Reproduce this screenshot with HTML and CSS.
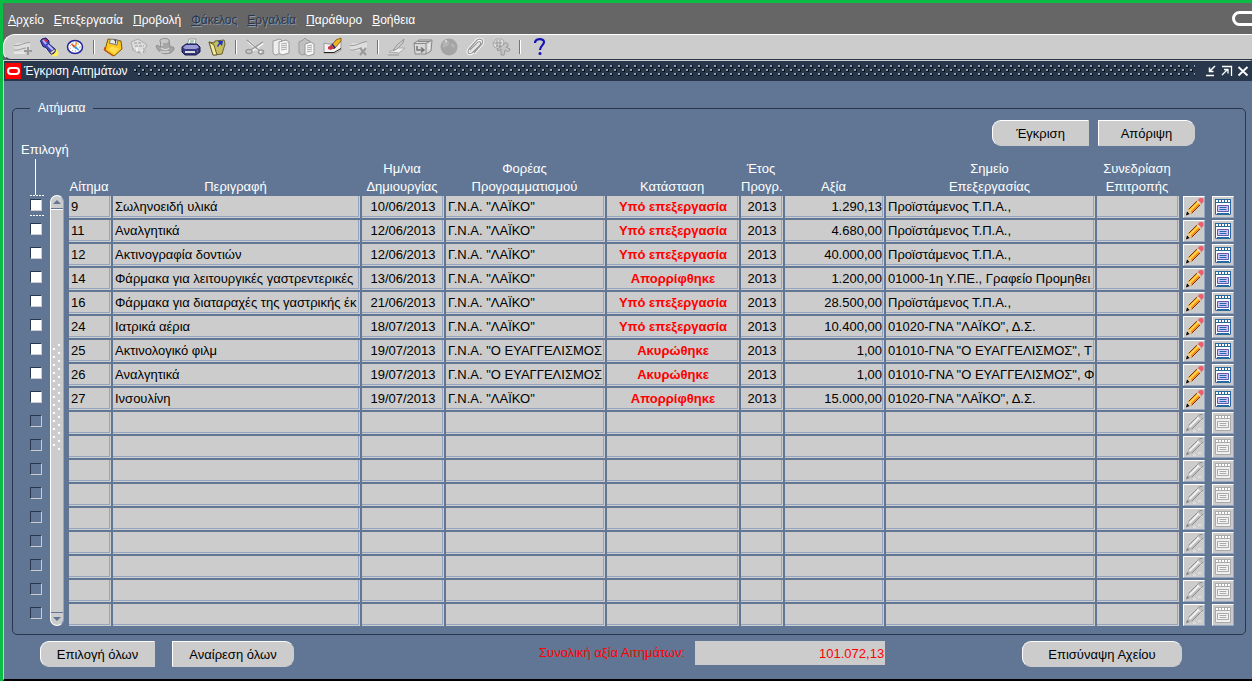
FILE: index.html
```html
<!DOCTYPE html>
<html lang="el">
<head>
<meta charset="utf-8">
<meta name="viewport" content="width=device-width, initial-scale=1">
<title>Έγκριση Αιτημάτων</title>
<link rel="stylesheet" href="styles.css">
</head>
<body>
<svg class="sprite" aria-hidden="true">
  <symbol id="pencil" viewBox="0 0 20 20"><path d="M3 18 4.500 12 14 2.500l4 4L8 16z" fill="#f79018"/><path d="M5.500 14 15 4.500" stroke="#ffd24a" stroke-width="2"/><path d="m7.500 16.500 10-10M4.500 12.500 14 3" stroke="#7a3a08" fill="none"/><path d="m14 3 1.500-2h3l1 1v3L17 7z" fill="#f0606a"/><path d="m13 3.500 4 4" stroke="#ddd" stroke-width="1.500"/><path d="M3 18l1.500-6 3.500 4z" fill="#ecc79a"/><path d="M2 18.500 3 14.500 5.500 17z" fill="#000"/></symbol>
  <symbol id="pencil-off" viewBox="0 0 20 20"><path d="M3 18 4.500 12 14 2.500l1.500-1.500h3l1 1v3L8 16z" fill="#bdbdbd"/><path d="M5.500 14 15 4.500" stroke="#f2f2f2" stroke-width="2"/><path d="m7.500 16.500 11.500-11.500M4.500 12.500 14 3l1.500-1.500h3" stroke="#8e8e8e" fill="none"/><path d="m13 3.500 4 4M9 18h3M14 16h3" stroke="#eee"/><path d="M2 18.500 3 14.500 5.500 17z" fill="#888"/></symbol>
  <symbol id="sheet" viewBox="0 0 20 20"><path fill="#fff" d="M2 2h16v16H2z"/><path d="M2.500 2.500h15v15h-15z" fill="none" stroke="#2866a0"/><path fill="#2866a0" d="M2 2h16v4H2z"/><path d="M3 4h15" stroke="#fff" stroke-width="2" stroke-dasharray="2 1"/><path d="M4.500 8.500h11v6h-11z" fill="#ccc8ff" stroke="#6058a8"/><path d="M6.500 10.500h7M6.500 12.500h7" stroke="#2866a0"/><path d="M4 16.500h12" stroke="#2866a0"/></symbol>
  <symbol id="sheet-off" viewBox="0 0 20 20"><path d="M2.500 2.500h15v15h-15z" fill="#eee" stroke="#aaa"/><path fill="#aaa" d="M2 2h16v4H2z"/><path d="M3 4h15" stroke="#fff" stroke-width="2" stroke-dasharray="2 1"/><path d="M4.500 8.500h11v6h-11z" fill="#f4f4f4" stroke="#aaa"/><path d="M6.500 10.500h7M6.500 12.500h7" stroke="#aaa"/></symbol>
</svg>

<nav class="menubar">
  <button class="menu"><u>Α</u>ρχείο</button>
  <button class="menu"><u>Ε</u>πεξεργασία</button>
  <button class="menu"><u>Π</u>ροβολή</button>
  <button class="menu" disabled><u>Φ</u>άκελος</button>
  <button class="menu" disabled><u>Ε</u>ργαλεία</button>
  <button class="menu"><u>Π</u>αράθυρο</button>
  <button class="menu"><u>Β</u>οήθεια</button>
  <svg class="brand" width="20" height="16" viewBox="0 0 20 16" aria-hidden="true"><rect x="1.500" y="1.500" width="28" height="12" rx="6" fill="none" stroke="#fff" stroke-width="3"/></svg>
</nav>

<div class="toolbar" role="toolbar" aria-label="Εργαλεία">
  <button class="tool" disabled aria-label="Νέα εγγραφή"><svg viewBox="0 0 20 20"><path d="M1 8l3-2h10l3-1v9l-4 1H1z" fill="#dedede"/><path d="M1 8.500c5 1 10-3 16-3M1 13c5 1 8-2 12-2" stroke="#999" fill="none"/><path d="M1 16h11" stroke="#fff"/><path d="M15 10v8M11 14h8" stroke="#999" stroke-width="2"/></svg></button>
  <button class="tool" aria-label="Εύρεση"><svg viewBox="0 0 20 20"><circle cx="16" cy="16" r="3.500" fill="#ffee55"/><path d="M1.500 4 3 2l4-1 3 3v3l6 5c1 3-1 5-4 5L7 10.500l-3-1z" fill="#4a4ac0" stroke="#16166a"/><path d="m4 3 3 4M9 8l5 5" stroke="#b4bbff" stroke-width="2"/><path d="M5.500 2.500 8 4" stroke="#e22" stroke-width="2"/><path d="m11 15.500 4.500-3.500 1 2-4 3z" fill="#ddd" stroke="#444" stroke-width=".7"/></svg></button>
  <button class="tool" aria-label="Πλοήγηση"><svg viewBox="0 0 20 20"><ellipse cx="10" cy="10" rx="7.500" ry="6.500" fill="#fff" stroke="#24249c" stroke-width="1.500"/><ellipse cx="10" cy="10" rx="5" ry="4" fill="none" stroke="#888" stroke-dasharray="1 2"/><path d="m5 6 6 3-2 2z" fill="#e05020"/><path d="m15 14-6-3 2-2z" fill="#2ba0ee"/><path d="m12 5-2 5" stroke="#e89a20" stroke-width="1.500"/></svg></button>
  <span class="sep"></span>
  <button class="tool" aria-label="Αποθήκευση"><svg viewBox="0 0 20 20"><path d="M5 2 18 4l1 8-8 7-9-6z" fill="#ffc61a" stroke="#7a5a00"/><path d="m8 2 7 1-1 5-8-2z" fill="#e8e8e8" stroke="#777"/><path d="m11 3 2 .5-.7 3" stroke="#333" fill="none"/><path d="m5 13 7 4 4-5-7-3z" fill="#ffdc50"/><path d="m2 10-1 3 9 6" fill="none" stroke="#d04a10"/></svg></button>
  <button class="tool" disabled aria-label="Επόμενο βήμα"><svg viewBox="0 0 20 20"><path d="m2 5 7-3 9 6-5 9-9-4z" fill="#ddd" stroke="#aaa"/><path d="M5 6h8M6 9h9M4 12h12M8 15h9" stroke="#999" stroke-dasharray="3 1"/><path d="M8 10v5M13 11v6M5 12h6" stroke="#fff"/></svg></button>
  <button class="tool" disabled aria-label="Αλλαγή αρμοδιότητας"><svg viewBox="0 0 20 20"><path d="M1 9c2-2 3 1 5 1l-1-7c3-2 7-2 9 0l1 7c2 0 3-1 4 1 0 7-15 9-18-2z" fill="#a6a6a6" stroke="#8c8c8c"/><ellipse cx="9.500" cy="4" rx="4" ry="2" fill="#c8c8c8"/><path d="M6 11c3 2 6 2 8 0M5 15h9M7 6v3" stroke="#eee" fill="none"/></svg></button>
  <button class="tool" aria-label="Εκτύπωση"><svg viewBox="0 0 20 20"><path d="m6 8 2-6h7l-1 6z" fill="#fff" stroke="#999"/><path d="M9 4h4M8.500 6h4" stroke="#55a080"/><path d="m1 10 4-3h11l3 3v5l-4 3H4l-3-3z" fill="#38387c" stroke="#18184c"/><path d="M2 10.500 5 8h11l2 2.500-3 1.500H4z" fill="#9c9cd8"/><path d="M4 15h10" stroke="#ddd" stroke-width="2"/><path d="M16 14h1" stroke="#e33" stroke-width="2"/></svg></button>
  <button class="tool" aria-label="Κλείσιμο φόρμας"><svg viewBox="0 0 20 20"><path d="m2 5 5 1 1-2 9-1 1 4-3 10-9 1z" fill="#c6bd62" stroke="#68602a"/><path d="m2 5 5 3 3 10-4 0z" fill="#f0eaa0" stroke="#68602a"/><path d="m11 4 5 0-1 5-2-2-2 3-1-1 2-3z" fill="#1a35c8"/></svg></button>
  <span class="sep"></span>
  <button class="tool" disabled aria-label="Αποκοπή"><svg viewBox="0 0 20 20"><path d="m3 4 13 11M18 6 6 14" stroke="#fff" stroke-width="2.500"/><path d="m2 3 13 11M18 5 6 13" stroke="#999" stroke-width="1.500"/><ellipse cx="4" cy="14.500" rx="3" ry="2" fill="none" stroke="#999" stroke-width="1.500"/><ellipse cx="16" cy="15" rx="2.500" ry="2" fill="none" stroke="#999" stroke-width="1.500"/></svg></button>
  <button class="tool" disabled aria-label="Αντιγραφή"><svg viewBox="0 0 20 20"><path d="m2 4 7-2 2 2v12l-7 2-2-2z" fill="#eee" stroke="#999"/><path d="m8 5 7-2 3 2v11l-7 2-3-2z" fill="#f6f6f6" stroke="#999"/><path d="m10 7 6-1M10 9l6-1M10 11l6-1M10 13l6-1" stroke="#aaa"/></svg></button>
  <button class="tool" disabled aria-label="Επικόλληση"><svg viewBox="0 0 20 20"><path d="m2 5 4-2 2-2 2 2 3 1v12l-8 2-3-2z" fill="#c0c0c0" stroke="#999"/><path d="m8 7 6-2 3 2v10l-6 2-3-2z" fill="#f6f6f6" stroke="#999"/><path d="m10 9 5-1M10 11l5-1M10 13l5-1M10 15l5-1" stroke="#aaa"/></svg></button>
  <button class="tool" aria-label="Καθαρισμός εγγραφής"><svg viewBox="0 0 20 20"><path d="M1 6l4 1h8l5-3v9l-5 3H1z" fill="#f2f2f2" stroke="#999"/><path d="M1 15.500h10l7-4" stroke="#222" fill="none"/><path d="m8 9 5-6 5-2v3l-7 8z" fill="#eeb522" stroke="#8b6210"/><path d="m5 10 3-2 3 3-3 2-3-1z" fill="#cc3344"/><path d="m9 7 3 4" stroke="#222288" stroke-width="1.500"/></svg></button>
  <button class="tool" disabled aria-label="Διαγραφή"><svg viewBox="0 0 20 20"><path d="M1 8l3-2h10l4-2v8l-4 2H1z" fill="#dedede"/><path d="M1 8.500c5 1 10-3 17-4M1 13c5 1 8-2 12-2" stroke="#999" fill="none"/><path d="m11 11 6 7M17 11l-6 7" stroke="#999" stroke-width="2"/></svg></button>
  <span class="sep"></span>
  <button class="tool" disabled aria-label="Επεξεργασία πεδίου"><svg viewBox="0 0 20 20"><path d="m2 15 7-4h9l-6 5z" fill="#eee" stroke="#aaa"/><path d="m6 14 4-6 7-6-1 4-6 6z" fill="#ccc" stroke="#999"/><path d="M1 18h11" stroke="#999"/></svg></button>
  <button class="tool" disabled aria-label="Μεταφορά"><svg viewBox="0 0 20 20"><path d="m1 6 5-3h13l-1 11-5 3H2z" fill="#d8d8d8" stroke="#888"/><path d="M1 6.500h12l5-3M13 7v10M5 4.500h12" stroke="#888" fill="none"/><path d="M4 9v4h6M8 10.500l3 2.500-3 2.500" stroke="#777" stroke-width="1.500" fill="none"/><path d="M15 8h2M15 11h2" stroke="#fff"/></svg></button>
  <button class="tool" disabled aria-label="Σφαίρα"><svg viewBox="0 0 20 20"><circle cx="10" cy="10" r="8.500" fill="#a4a4a4"/><path d="M4 6c3-4 7-2 6 1s-4 2-6 4zM12 6l4 2-1 3-3-2z" fill="#b4b4b4"/><path d="M6 4h2" stroke="#fff"/></svg></button>
  <button class="tool" disabled aria-label="Συνημμένα"><svg viewBox="0 0 20 20"><path d="m5 13 8-8c3-1 3 1 2 3l-8 8c-4 2-5-1-3-4l8-9c4-2 7 0 5 4l-8 9" fill="none" stroke="#fff" stroke-width="3"/><path d="m5 13 8-8c3-1 3 1 2 3l-8 8c-4 2-5-1-3-4l8-9c4-2 7 0 5 4l-8 9" fill="none" stroke="#999" stroke-width="1.300"/></svg></button>
  <button class="tool" disabled aria-label="Εργαλεία φακέλου"><svg viewBox="0 0 20 20"><path d="M2 6 5 2h6l2 2-1 6-4 2-5-2z" fill="#ddd" stroke="#aaa"/><path d="M3 6h8M5 9h5M6 3v7M9 3v7" stroke="#999"/><path d="M14 6c4-1 4 4 1 4l4 2c0 3-3 3-5 1l-1 5h-3v-6l-3 2-1-2 5-3z" fill="#c4c4c4" stroke="#999"/></svg></button>
  <span class="sep"></span>
  <button class="tool" aria-label="Βοήθεια"><svg viewBox="0 0 20 20"><path d="M6 6c0-5 9-5 9-1 0 3-4 4-4 8" fill="none" stroke="#1414b4" stroke-width="2.200"/><circle cx="11" cy="16.500" r="1.500" fill="#1414b4"/></svg></button>
</div>

<main class="window">
  <header class="titlebar">
    <svg class="logo" width="16" height="16" viewBox="0 0 16 16" aria-hidden="true"><path fill="#f00" d="M0 0h16v16H0z"/><rect x="3" y="5" width="11" height="6" rx="3" fill="none" stroke="#fff" stroke-width="2"/></svg>
    <h1 class="title">Έγκριση Αιτημάτων</h1>
    <span class="grip"></span>
    <button class="winbtn" aria-label="Ελαχιστοποίηση"><svg viewBox="0 0 12 12"><path d="M1 10.500h8" stroke="#fff" stroke-width="1.500"/><path d="m10 1-5 5M4.500 2.500v4h4" fill="none" stroke="#fff" stroke-width="1.500"/></svg></button>
    <button class="winbtn" aria-label="Μεγιστοποίηση"><svg viewBox="0 0 12 12"><path d="M1 1.500h9.500V11M1 10l5.500-5.500M3 4.500h4v4" fill="none" stroke="#fff" stroke-width="1.300"/></svg></button>
    <button class="winbtn" aria-label="Κλείσιμο"><svg viewBox="0 0 12 12"><path d="m1.500 2 9 8.500M10.500 2l-9 8.500" stroke="#fff" stroke-width="1.800"/></svg></button>
  </header>

  <fieldset class="group">
    <legend>Αιτήματα</legend>
    <div class="body">
      <div class="select">
        <span class="select-label">Επιλογή</span>
        <span class="select-line"></span>
        <div class="checks" id="checks"></div>
      </div>
      <div class="scroll">
        <button class="scroll-btn" aria-label="Πάνω"><svg viewBox="0 0 12 12"><path d="M2 8h8L6 4z" fill="#617694"/></svg></button>
        <div class="track"><span class="thumb"></span></div>
        <button class="scroll-btn down" aria-label="Κάτω"><svg viewBox="0 0 12 12"><path d="M2 4h8L6 8z" fill="#617694"/></svg></button>
      </div>
      <div class="content">
        <div class="actions">
          <button class="btn left">Έγκριση</button>
          <button class="btn right">Απόριψη</button>
        </div>
        <table class="grid">
          <colgroup>
            <col class="c-id"><col><col class="c-date"><col class="c-body"><col class="c-status"><col class="c-year"><col class="c-value"><col class="c-point"><col class="c-meet"><col class="c-edit"><col class="c-view">
          </colgroup>
          <thead>
            <tr><th>Αίτημα</th><th>Περιγραφή</th><th>Ημ/νια<br>Δημιουργίας</th><th>Φορέας<br>Προγραμματισμού</th><th>Κατάσταση</th><th>Έτος<br>Προγρ.</th><th>Αξία</th><th>Σημείο<br>Επεξεργασίας</th><th>Συνεδρίαση<br>Επιτροπής</th><td></td><td></td></tr>
          </thead>
          <tbody id="rows"></tbody>
        </table>
      </div>
    </div>
  </fieldset>

  <footer class="footer">
    <button class="btn left wide">Επιλογή όλων</button>
    <button class="btn right wider">Αναίρεση όλων</button>
    <div class="total">
      <label for="total">Συνολική αξία Αιτημάτων:</label>
      <input id="total" type="text" value="101.072,13" readonly>
    </div>
    <button class="btn left right attach">Επισύναψη Αχείου</button>
  </footer>
</main>
<script src="rows.js"></script>
</body>
</html>
```
FILE: styles.css
```css
* { box-sizing: border-box; }
body {
  margin: 0;
  min-height: 100vh;
  display: flex;
  flex-direction: column;
  border: 3px solid #0abc44;
  border-width: 3px 0 0 3px;
  background: #666;
  color: #000;
  font: 13px/18px "Liberation Sans", Arial, sans-serif;
}
button { font: inherit; color: inherit; border: 0; padding: 0; background: none; }
.sprite { display: none; }

.menubar { display: flex; align-items: center; gap: 10px; height: 31px; padding: 2px 0 0 5px; font-size: 12px; color: #fff; }
.menu:disabled { color: #28374c; text-shadow: 1px 1px #8c98a8; }
.brand { margin-left: auto; margin-bottom: 2px; }

.toolbar { display: flex; align-items: center; height: 26px; padding-left: 6px; background: #ccc; border-top: 1px solid #fff; border-bottom: 1px solid #28374c; border-left: 1px solid #fff; border-radius: 12px 0 0 8px; }
.tool { width: 26px; height: 22px; display: grid; place-items: center; }
.tool svg { width: 20px; height: 20px; fill: none; }
.sep { width: 12px; height: 14px; background: linear-gradient(90deg, transparent 5px, #617694 5px 6px, #fff 6px 7px, transparent 7px); }

.window { flex: 1; display: flex; flex-direction: column; background: #617694; border-left: 1px solid #ccc; border-top: 1px solid #ccc; border-bottom: 2px solid #000; border-radius: 0 3px 0 0; }
.titlebar { display: flex; align-items: center; height: 20px; padding: 0 1px; background: #28374c; color: #fff; }
.title { margin: 0 6px 0 3px; font-size: 12px; font-weight: normal; }
.grip {
  flex: 1;
  height: 12px;
  margin-right: 8px;
  background:
    linear-gradient(#9fb2ca, #9fb2ca) 0 4px / 8px 8px,
    linear-gradient(#9fb2ca, #9fb2ca) 4px 0 / 8px 8px;
  background:
    conic-gradient(from 270deg at 2px 2px, #8ea3bd 90deg, transparent 0) 0 4px / 8px 8px,
    conic-gradient(from 270deg at 2px 2px, #8ea3bd 90deg, transparent 0) 4px 0 / 8px 8px,
    conic-gradient(from 270deg at 3px 3px, #0c121c 90deg, transparent 0) 0 4px / 8px 8px,
    conic-gradient(from 270deg at 3px 3px, #0c121c 90deg, transparent 0) 4px 0 / 8px 8px;
}
.winbtn { width: 16px; height: 16px; display: grid; place-items: center; }
.winbtn svg { width: 12px; height: 12px; }

.group { min-width: 0; margin: 18px 6px 0 8px; padding: 1px 10px 6px 0; border: 1px solid #28374c; border-radius: 5px; }
.group legend { margin-left: 17px; padding: 0 8px; color: #fff; font-size: 12px; }
.body { display: flex; }
.select { width: 37px; padding: 23px 0 0 8px; display: flex; flex-direction: column; color: #fff; white-space: nowrap; }
.select-line { width: 1px; height: 36px; margin-left: 14px; background: #fff; }
.checks { padding-left: 9px; }
.check { appearance: none; display: block; width: 12px; height: 12px; margin: 0; border: 1px solid #28374c; border-right-color: #ccc; border-bottom-color: #ccc; background: #fff; }
.check:disabled { background: transparent; }
.check-slot { width: 14px; height: 24px; padding-top: 4px; }
.check-slot.current { background: repeating-linear-gradient(90deg, #fff 0 2px, transparent 2px 3px) 0 0 / 100% 1px no-repeat, repeating-linear-gradient(90deg, #fff 0 2px, transparent 2px 3px) 0 20px / 100% 1px no-repeat; }

.scroll { width: 14px; margin: 77px 5px 2px 0; display: flex; flex-direction: column; background: #ccc; border: 1px solid #fff; border-right-color: #93a5bf; border-radius: 7px; overflow: hidden; }
.scroll-btn { height: 13px; display: grid; place-items: center; border-bottom: 1px solid #617694; }
.scroll-btn.down { border-bottom: 0; border-top: 1px solid #617694; }
.scroll-btn svg { width: 12px; height: 12px; }
.track { flex: 1; display: flex; flex-direction: column; align-items: center; padding-top: 134px; border-top: 1px solid #fff; }
.thumb {
  width: 8px;
  height: 108px;
  background:
    conic-gradient(from 270deg at 2px 2px, #fff 90deg, transparent 0) 0 4px / 8px 8px,
    conic-gradient(from 270deg at 2px 2px, #fff 90deg, transparent 0) 5px 0 / 8px 8px;
}

.content { flex: 1; min-width: 0; }
.actions { display: flex; justify-content: flex-end; gap: 9px; padding: 2px 40px 0 0; }
.btn { min-width: 97px; height: 26px; padding-top: 1px; background: #ccc; border: 1px solid #ccc; border-top-color: #fff; border-left-color: #fff; }
.btn.left { border-top-left-radius: 9px; border-bottom-left-radius: 9px; }
.btn.right { border-top-right-radius: 9px; border-bottom-right-radius: 9px; }

.grid { width: 100%; table-layout: fixed; border-collapse: collapse; }
.c-id, .c-year { width: 44px; }
.c-date, .c-meet { width: 84px; }
.c-body { width: 161px; }
.c-status { width: 134px; }
.c-value { width: 101px; }
.c-point { width: 211px; }
.c-edit { width: 31px; }
.c-view { width: 23px; }
.grid th { height: 50px; padding: 0 4px 0 0; vertical-align: bottom; color: #fff; font-weight: normal; white-space: nowrap; }
.grid tbody td { height: 24px; padding: 0 2px 2px 0; }
.field { height: 22px; padding: 2px 2px 0; overflow: hidden; white-space: nowrap; background: #ccc; box-shadow: inset -1px -1px #ccc, inset -2px -2px #93a5bf; }
.field.center { text-align: center; }
.field.right { text-align: right; }
.field.status { text-align: center; color: #f00; font-weight: bold; }
.grid tbody td.icon { padding: 0 0 2px; }
.icon-btn { display: grid; place-items: center; width: 22px; height: 22px; background: #ccc; border: 1px solid #fff; border-right-color: #93a5bf; border-bottom-color: #93a5bf; }
.icon.edit .icon-btn { margin-left: 2px; }
.icon-btn svg { width: 20px; height: 20px; }

.footer { display: flex; align-items: flex-start; padding: 6px 70px 11px 36px; }
.footer .wide { width: 115px; }
.footer .wider { width: 122px; margin-left: 17px; }
.footer .attach { width: 160px; margin-left: auto; }
.total { display: flex; align-items: center; gap: 10px; margin-left: 245px; color: #f00; }
.total input { width: 190px; height: 24px; padding: 0 1px; border: 0; background: #ccc; color: #f00; font: inherit; text-align: right; }
```
FILE: rows.js
```js
const requests = [
  ["9", "Σωληνοειδή υλικά", "10/06/2013", "Γ.Ν.Α. \"ΛΑΪΚΟ\"", "Υπό επεξεργασία", "2013", "1.290,13", "Προϊστάμενος Τ.Π.Α.,"],
  ["11", "Αναλγητικά", "12/06/2013", "Γ.Ν.Α. \"ΛΑΪΚΟ\"", "Υπό επεξεργασία", "2013", "4.680,00", "Προϊστάμενος Τ.Π.Α.,"],
  ["12", "Ακτινογραφία δοντιών", "12/06/2013", "Γ.Ν.Α. \"ΛΑΪΚΟ\"", "Υπό επεξεργασία", "2013", "40.000,00", "Προϊστάμενος Τ.Π.Α.,"],
  ["14", "Φάρμακα για λειτουργικές γαστρεντερικές", "13/06/2013", "Γ.Ν.Α. \"ΛΑΪΚΟ\"", "Απορρίφθηκε", "2013", "1.200,00", "01000-1η Υ.ΠΕ., Γραφείο Προμηθει"],
  ["16", "Φάρμακα για διαταραχές της γαστρικής έκ", "21/06/2013", "Γ.Ν.Α. \"ΛΑΪΚΟ\"", "Υπό επεξεργασία", "2013", "28.500,00", "Προϊστάμενος Τ.Π.Α.,"],
  ["24", "Ιατρικά αέρια", "18/07/2013", "Γ.Ν.Α. \"ΛΑΪΚΟ\"", "Υπό επεξεργασία", "2013", "10.400,00", "01020-ΓΝΑ \"ΛΑΪΚΟ\", Δ.Σ."],
  ["25", "Ακτινολογικό φιλμ", "19/07/2013", "Γ.Ν.Α. \"Ο ΕΥΑΓΓΕΛΙΣΜΟΣ", "Ακυρώθηκε", "2013", "1,00", "01010-ΓΝΑ \"Ο ΕΥΑΓΓΕΛΙΣΜΟΣ\", Τ"],
  ["26", "Αναλγητικά", "19/07/2013", "Γ.Ν.Α. \"Ο ΕΥΑΓΓΕΛΙΣΜΟΣ", "Ακυρώθηκε", "2013", "1,00", "01010-ΓΝΑ \"Ο ΕΥΑΓΓΕΛΙΣΜΟΣ\", Φ"],
  ["27", "Ινσουλίνη", "19/07/2013", "Γ.Ν.Α. \"ΛΑΪΚΟ\"", "Απορρίφθηκε", "2013", "15.000,00", "01020-ΓΝΑ \"ΛΑΪΚΟ\", Δ.Σ."]
];
const visibleRows = 18;
const kinds = ["", "", "center", "", "status", "center", "right", "", ""];
const rows = document.getElementById("rows");
const checks = document.getElementById("checks");

for (let i = 0; i < visibleRows; i++) {
  const data = requests[i];
  const off = data ? "" : "-off";
  const disabled = data ? "" : " disabled";
  const cells = kinds.map((kind, c) => `<td><div class="field ${kind}">${(data && data[c]) || ""}</div></td>`).join("");
  rows.insertAdjacentHTML("beforeend", `<tr>${cells}
    <td class="icon edit"><button class="icon-btn" aria-label="Επεξεργασία"${disabled}><svg><use href="#pencil${off}"/></svg></button></td>
    <td class="icon"><button class="icon-btn" aria-label="Λεπτομέρειες"${disabled}><svg><use href="#sheet${off}"/></svg></button></td></tr>`);
  checks.insertAdjacentHTML("beforeend", `<div class="check-slot${i === 0 ? " current" : ""}"><input class="check" type="checkbox" aria-label="Επιλογή ${data ? data[0] : ""}"${disabled}></div>`);
}
```
